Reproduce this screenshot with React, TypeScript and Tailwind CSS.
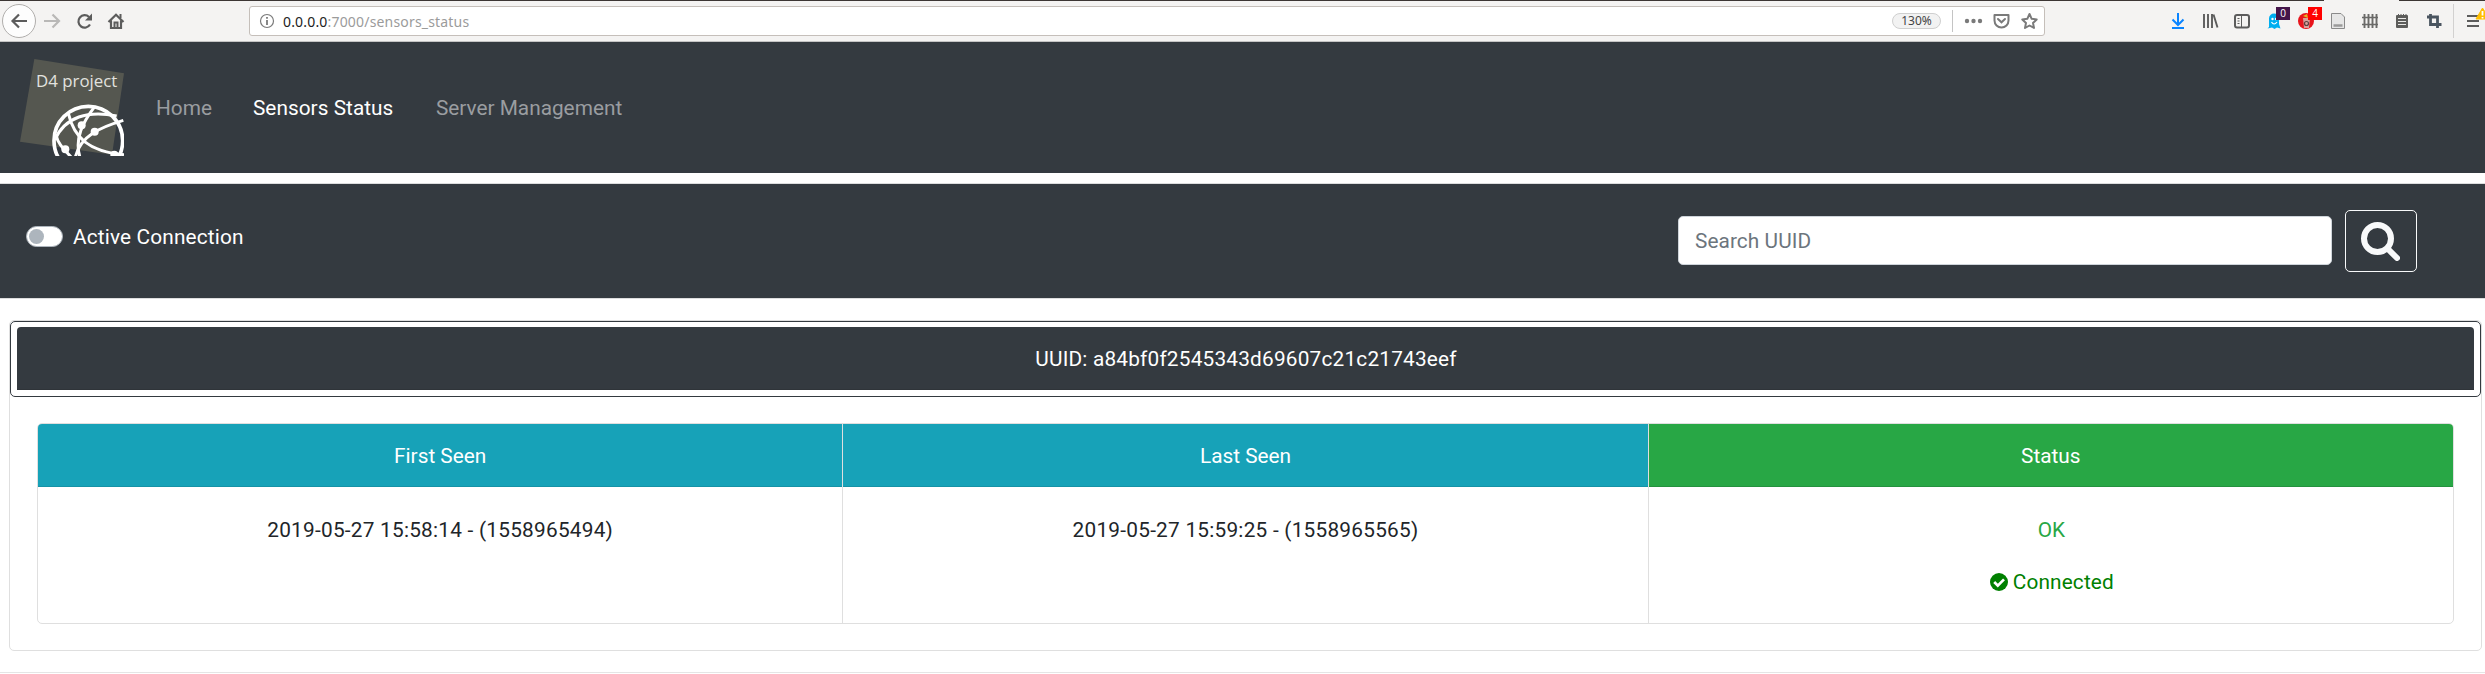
import React from "react";

const columns = [
  { title: "First Seen", color: "bg-[#17a2b8]", body: "2019-05-27 15:58:14 - (1558965494)" },
  { title: "Last Seen", color: "bg-[#17a2b8]", body: "2019-05-27 15:59:25 - (1558965565)" },
];

function BrowserNavIcons() {
  return (
    <svg className="h-[40px] w-[249px] shrink-0" viewBox="0 1 249 40" fill="none">
      <circle cx="19" cy="21" r="16.5" fill="#fdfdfd" stroke="#b0aeac" />
      <path d="M27 21H12.500M19 14.500L12.500 21L19 27.500" stroke="#5c5c5c" strokeWidth="2.200" />
      <path d="M44 21H59M52.500 14.500L59 21L52.500 27.500" stroke="#b9b8b7" strokeWidth="2.200" />
      <path d="M90 24.500A6.200 6.200 0 1 1 89 17" stroke="#5c5c5c" strokeWidth="2.200" />
      <path d="M92 13.500V20.500H85Z" fill="#5c5c5c" />
      <path d="M108.500 22L116 14.800L123.500 22M111 20.500V28H121V20.500" stroke="#5c5c5c" strokeWidth="2.200" />
      <path d="M114.500 28V22.500H117.500V28M120.500 14V18" stroke="#5c5c5c" strokeWidth="2" />
    </svg>
  );
}

function AddressIcons() {
  return (
    <svg className="h-[28px] w-[92px] shrink-0" viewBox="1953 7 92 28" fill="none">
      <path d="M1953.500 10V32" stroke="#c4c4c4" />
      <g fill="#7a7a7a">
        <circle cx="1968" cy="21" r="2.200" />
        <circle cx="1974.500" cy="21" r="2.200" />
        <circle cx="1981" cy="21" r="2.200" />
      </g>
      <path d="M1995.500 15H2009.500V20.500A7 7 0 0 1 1995.500 20.500Z" stroke="#7a7a7a" strokeWidth="2" strokeLinejoin="round" />
      <path d="M1999 19L2002.500 22.300L2006 19" stroke="#7a7a7a" strokeWidth="2" strokeLinecap="round" />
      <path d="M2030.500 14L2032.700 18.800L2037.700 19.400L2034 22.900L2035 28L2030.500 25.500L2026 28L2027 22.900L2023.300 19.400L2028.300 18.800Z" stroke="#7a7a7a" strokeWidth="2" strokeLinejoin="round" />
    </svg>
  );
}

function ExtensionIcons() {
  return (
    <svg className="h-[40px] w-[325px] shrink-0 font-['Open_Sans',sans-serif]" viewBox="2160 1 325 40" fill="none">
      <path d="M2178 13V25M2172.500 19.500L2178 25L2183.500 19.500M2172 28H2184" stroke="#0a84ff" strokeWidth="2" />
      <path d="M2204 14V28M2208 14V28M2212 14V28M2213.500 14.500L2217.500 27.500" stroke="#5c5c5c" strokeWidth="1.900" />
      <rect x="2235" y="15" width="14" height="12.500" rx="2" stroke="#5c5c5c" strokeWidth="2" />
      <path d="M2241.500 15V27M2237.500 18.500H2239.500M2237.500 21H2239.500M2237.500 23.500H2239.500" stroke="#5c5c5c" />
      <path d="M2269 27V18.500A5 5 0 0 1 2279 18.500V24L2280.500 28.500L2277 27.500L2274.500 29L2272 27.500L2267.500 28.500Z" fill="#00aef0" />
      <path d="M2271.500 22Q2274 26 2277 22" stroke="#fff" strokeWidth="1.200" />
      <circle cx="2272.500" cy="19" r="1.200" fill="#fff" />
      <circle cx="2276" cy="19" r="1.200" fill="#fff" />
      <rect x="2276" y="7" width="14" height="13" fill="#44154a" />
      <text x="2283" y="17" fontSize="10" fill="#fff" textAnchor="middle">0</text>
      <circle cx="2306" cy="21" r="8" fill="#e8141c" />
      <path d="M2303 18H2310L2309 28H2304Z" fill="#d9a09a" />
      <path d="M2303 16L2307 14L2308 18Z" fill="#e6b422" />
      <circle cx="2306.500" cy="23.500" r="2" stroke="#5d4040" strokeWidth="1.200" />
      <rect x="2308" y="7" width="14" height="13" fill="#f00" />
      <text x="2315" y="17" fontSize="10" fill="#fff" textAnchor="middle">4</text>
      <path d="M2331.500 13.500H2341L2344.500 17V28.500H2331.500Z" fill="#e6e6e6" stroke="#8a8a8a" />
      <path d="M2333.500 25.500H2342.500" stroke="#9a9a9a" strokeWidth="2.500" />
      <path d="M2364.500 14V28M2368.500 14V28M2372.500 14V28M2376.500 14V28" stroke="#6a6a68" strokeWidth="1.900" />
      <path d="M2362 17.500H2378M2362 24.500H2378" stroke="#6a6a68" strokeWidth="1.300" />
      <rect x="2396" y="15" width="12" height="13" rx="1" fill="#5c5c5a" />
      <path d="M2398.500 14V16M2401 14V16M2403.500 14V16M2406 14V16" stroke="#5c5c5a" />
      <path d="M2398 18.500H2406M2398 21.500H2406M2398 24.500H2406" stroke="#e8e8e6" />
      <path d="M2430.500 14V24.500H2441.500M2427 17H2437.500V28" stroke="#4a5560" strokeWidth="2.800" />
      <path d="M2453.500 4V38" stroke="#d2d1d0" />
      <path d="M2467 16H2479M2467 21H2479M2467 26H2479" stroke="#5c5c5c" strokeWidth="1.900" />
      <path d="M2482.500 8L2489.500 19H2476Z" fill="#ffbf00" stroke="#ffbf00" strokeLinejoin="round" />
      <path d="M2482.500 11V15.500M2482.500 17V18.500" stroke="#fff" strokeWidth="1.800" />
    </svg>
  );
}

function Toolbar() {
  return (
    <div className="flex h-[42px] flex-col border-b border-[#c4c4c4] bg-[#f4f3f2]">
      <div className="flex h-px shrink-0">
        <div className="w-[2324px] bg-[#3c3634]" />
        <div className="w-[75px]" />
        <div className="flex-1 bg-[#3c3634]" />
      </div>
      <div className="flex h-[40px] items-center">
        <BrowserNavIcons />
        <div className="flex h-[30px] w-[1796px] items-center rounded-[3px] border border-[#c5bfba] bg-white pl-[9px] font-['Noto_Sans',sans-serif]">
          <svg className="h-[16px] w-[16px]" viewBox="0 0 16 16" fill="none" stroke="#7a7a7a">
            <circle cx="8" cy="8" r="6.500" strokeWidth="1.200" />
            <path d="M8 7V12M8 4V5.800" strokeWidth="1.800" />
          </svg>
          <span className="mt-[1px] ml-[8px] text-[14px] leading-[20px] tracking-[0.18px] text-[#9b9b9b]">
            <span className="text-[#222]">0.0.0.0</span>:7000/sensors_status
          </span>
          <span className="mr-[11px] ml-auto flex h-[16px] w-[49px] items-center justify-center rounded-full border border-[#cfcfcf] bg-[#f2f2f2] text-[12px] leading-none text-[#444]">
            130%
          </span>
          <AddressIcons />
        </div>
        <div className="flex-1" />
        <ExtensionIcons />
      </div>
    </div>
  );
}

function Logo() {
  return (
    <svg className="h-[100px] w-[106px] shrink-0" viewBox="60 24 318 300" fill="none">
      <defs>
        <clipPath id="logo">
          <rect x="60" y="24" width="312" height="294" />
        </clipPath>
      </defs>
      <path d="M103 27L372 70L336 314L60 275Z" fill="#555750" />
      <text x="108" y="111" fontSize="49" textLength="244" lengthAdjust="spacingAndGlyphs" fill="#e2e2df" className="font-['Open_Sans',sans-serif]">
        D4 project
      </text>
      <g clipPath="url(#logo)" stroke="#fff" strokeWidth="9">
        <circle cx="265" cy="272" r="103" strokeWidth="11" />
        <path d="M284 170C250 215 222 265 240 322" />
        <path d="M205 190C222 262 265 305 372 314" />
        <path d="M164 270C195 200 265 180 350 198" />
        <path d="M370 211C300 232 240 258 226 322" />
        <path d="M168 255C175 285 195 300 214 322" />
        <g fill="#fff" stroke="none">
          <circle cx="245" cy="226" r="12" />
          <circle cx="284" cy="245" r="12" />
          <circle cx="196" cy="298" r="12" />
          <circle cx="343" cy="314" r="12" />
        </g>
      </g>
    </svg>
  );
}

export default function App() {
  return (
    <div className="h-[674px] overflow-hidden bg-white font-[Roboto,sans-serif] text-[20.8px] leading-[31px] text-[#212529]">
      <Toolbar />
      <nav className="flex h-[131px] items-center bg-[#343a40] pl-[20px] text-[#9a9da0]">
        <Logo />
        <a className="mt-[2px] ml-[30px]">Home</a>
        <a className="mt-[2px] ml-[41px] tracking-[0.04px] text-white">Sensors Status</a>
        <a className="mt-[2px] ml-[42.5px]">Server Management</a>
      </nav>

      <section className="mt-[10px] flex h-[116px] border-y border-[#dcddde] bg-[#343a40]">
        <div className="mt-[37px] flex h-[31px] items-center pl-[26px] text-white">
          <span className="flex h-[21px] w-[37px] items-center rounded-full border border-[#adb5bd] bg-white pl-[2px]">
            <span className="size-[15px] rounded-full bg-[#adb5bd]" />
          </span>
          <span className="mt-[2px] ml-[10px] tracking-[0.16px]">Active Connection</span>
        </div>
        <div className="mr-[68px] ml-auto flex">
          <div className="mt-[32px] flex h-[49px] w-[654px] items-center rounded-[5px] border border-[#ced4da] bg-white pt-[2px] pl-[16px] tracking-[0.08px] text-[#6c757d]">
            Search UUID
          </div>
          <button className="mt-[26px] ml-[13px] flex h-[62px] w-[72px] items-center justify-center rounded-[5px] border border-[#f8f9fa]">
            <svg className="-ml-[2px] h-[39px] w-[39px]" viewBox="0 0 39 39" fill="none" stroke="#f8f9fa">
              <circle cx="16.500" cy="16.500" r="13.500" strokeWidth="6" />
              <path d="M27 27L36 36" strokeWidth="6" strokeLinecap="round" />
            </svg>
          </button>
        </div>
      </section>

      <section className="mt-[21px] mr-[3px] ml-[9px] h-[331px] rounded-[5px] border border-[#dfdfdf] text-center">
        <div className="h-[76px] rounded-[5px] border border-[#343a40] pt-[5px] pr-[6px] pl-[6px]">
          <div className="h-[63px] rounded-t-[4px] border-b border-[#2f3439] bg-[#343a40] pt-[17px] pl-px tracking-[0.2px] text-white">
            UUID: a84bf0f2545343d69607c21c21743eef
          </div>
        </div>
        <div className="mt-[26px] mr-[27px] ml-[27px] flex h-[201px] overflow-hidden rounded-[5px] border border-[#dfdfdf]">
          {columns.map((c) => (
            <div key={c.title} className="flex-1 border-r border-[#dfdfdf]">
              <div className={"h-[63px] border-b border-b-[#1592a6] pt-[17px] text-white " + c.color}>{c.title}</div>
              <div className="pt-[28px] tracking-[0.24px]">{c.body}</div>
            </div>
          ))}
          <div className="flex-1">
            <div className="h-[63px] border-b border-b-[#24923e] bg-[#28a745] pt-[17px] text-white">Status</div>
            <div className="pt-[28px] pl-px text-[#28a745]">OK</div>
            <div className="mt-[20px] flex items-center justify-center pl-[2px] text-[#008000]">
              <svg className="mr-[5px] size-[18px]" viewBox="0 0 18 18" fill="none">
                <circle cx="9" cy="9" r="9" fill="#008000" />
                <path d="M4.200 9L7.800 12.600L14 6.400" stroke="#fff" strokeWidth="2.700" />
              </svg>
              <span className="mt-px tracking-[0.15px]">Connected</span>
            </div>
          </div>
        </div>
      </section>
      <hr className="mt-[21px] border-t border-[#e5e5e5]" />
    </div>
  );
}
